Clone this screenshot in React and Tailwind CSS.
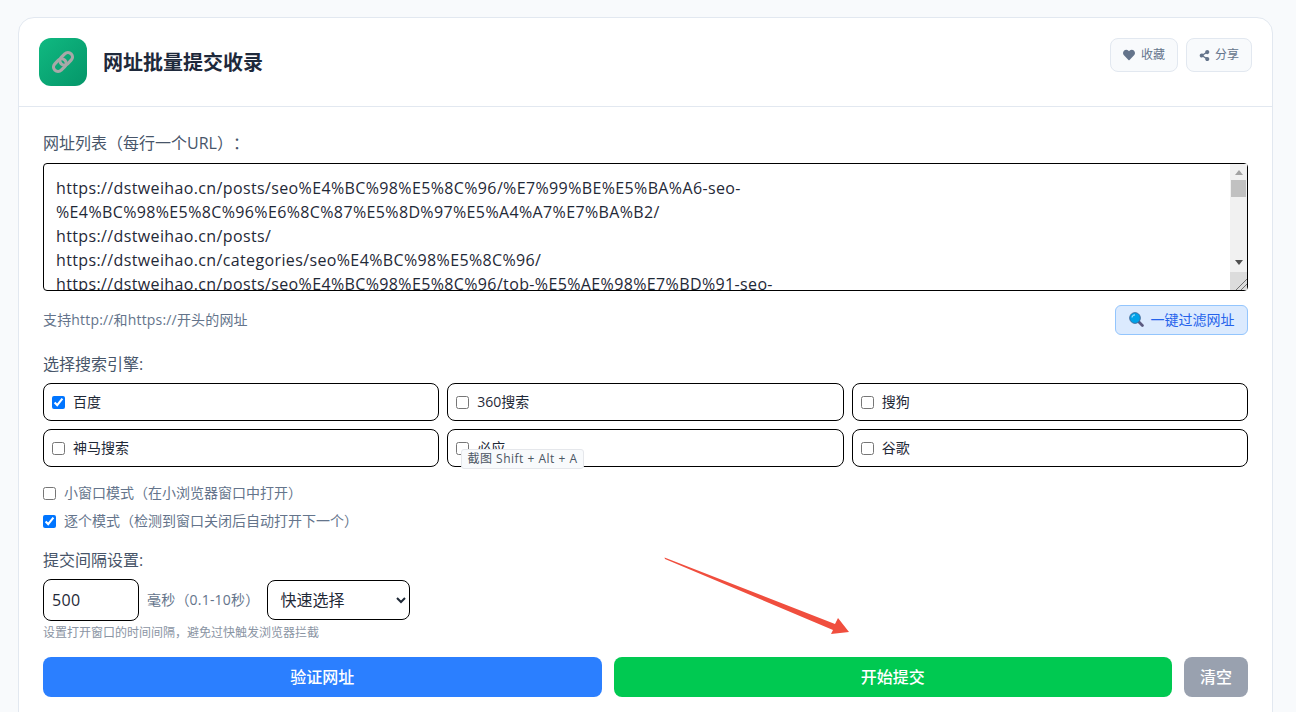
import React from "react";
import { FaHeart, FaShareAlt } from "react-icons/fa";

const urls = `https://dstweihao.cn/posts/seo%E4%BC%98%E5%8C%96/%E7%99%BE%E5%BA%A6-seo-%E4%BC%98%E5%8C%96%E6%8C%87%E5%8D%97%E5%A4%A7%E7%BA%B2/
https://dstweihao.cn/posts/
https://dstweihao.cn/categories/seo%E4%BC%98%E5%8C%96/
https://dstweihao.cn/posts/seo%E4%BC%98%E5%8C%96/tob-%E5%AE%98%E7%BD%91-seo-%E4%BC%98%E5%8C%96%E6%8C%87%E5%8D%97%E5%A4%A7%E7%BA%B2%E5%AE%98%E7%BD%91%E4%BC%98%E5%8C%96%E6%8C%87%E5%8D%97%E5%A4%A7%E7%BA%B2%E5%AE%98%E7%BD%91/`;

const font = "font-['Open_Sans','Noto_Sans_CJK_SC',sans-serif] [text-spacing-trim:space-all]";

function LinkIcon() {
  return (
    <svg width="26" height="26" viewBox="0 0 26 26" fill="none">
      <g transform="rotate(-45 13 13)" stroke="#a8a8a8" strokeWidth="3.2">
        <rect x="1.5" y="8.5" width="14" height="9" rx="4.5" />
        <rect x="10.5" y="8.5" width="14" height="9" rx="4.5" />
      </g>
    </svg>
  );
}

function SearchIcon() {
  return (
    <svg width="15" height="15" viewBox="0 0 15 15">
      <path d="M9.5 9.5 L13.4 13.4" stroke="#5b5a80" strokeWidth="2.8" strokeLinecap="round" />
      <circle cx="6" cy="6" r="5.4" fill="#00a2e8" stroke="#3f5f8f" strokeWidth="0.8" />
      <path d="M3 5.5 A3.2 3.2 0 0 1 6 2.8" stroke="#8fdcff" strokeWidth="1.2" fill="none" />
    </svg>
  );
}

function Engine({ label, checked }) {
  return (
    <label className="flex h-[38px] items-center rounded-lg border border-black pl-2 text-[14px] text-[#1f2937]">
      <input type="checkbox" defaultChecked={checked} className="m-0 h-[13px] w-[13px] accent-[#0075ff]" />
      <span className="ml-[8px] pb-[2px]">{label}</span>
    </label>
  );
}

function Mode({ label, checked }) {
  return (
    <label className="flex h-[28px] items-center text-[14px] text-[#64748b]">
      <input type="checkbox" defaultChecked={checked} className="m-0 h-[13px] w-[13px] accent-[#0075ff]" />
      <span className="ml-[8px] pb-[2px]">{label}</span>
    </label>
  );
}

export default function App() {
  return (
    <div className={`${font} relative h-[712px] w-[1296px] overflow-hidden bg-[#f8fafc] pl-[18px] pr-[23px] pt-[17px]`}>
      <div className="h-[760px] rounded-2xl border border-[#e2e8f0] bg-white">
        <header className="flex h-[89px] items-start justify-between border-b border-[#e2e8f0] pl-[20px] pr-[20px] pt-[20px]">
          <div className="flex items-center">
            <div className="flex h-12 w-12 items-center justify-center rounded-xl bg-gradient-to-br from-[#10b981] to-[#059669]">
              <LinkIcon />
            </div>
            <h1 className="ml-4 pt-[2px] text-[20px] font-bold text-[#1e293b]">网址批量提交收录</h1>
          </div>
          <div className="flex gap-2">
            <button className="flex h-[34px] w-[68px] items-center justify-center gap-[6px] rounded-lg border border-[#e2e8f0] bg-[#f8fafc] text-[12px] text-[#64748b]">
              <FaHeart className="text-[12px]" />
              收藏
            </button>
            <button className="flex h-[34px] w-[66px] items-center justify-center gap-[5px] rounded-lg border border-[#e2e8f0] bg-[#f8fafc] text-[12px] text-[#64748b]">
              <FaShareAlt className="text-[11px]" />
              分享
            </button>
          </div>
        </header>

        <main className="px-[24px] pt-[24px]">
          <div className="mb-[8px] h-[24px] text-[16px] leading-[24px] text-[#475569]">网址列表（每行一个URL）：</div>
          <div className="relative">
            <textarea
              readOnly
              defaultValue={urls}
              className="block h-[128px] w-full resize-y overflow-hidden rounded-[4px] border border-black py-[12px] pl-[12px] pr-[40px] text-[16px] leading-[24px] tracking-[0.37px] text-[#1f2937]"
            />
            <div className="absolute bottom-px right-px top-px flex w-[17px] flex-col items-center bg-[#f1f1f1] pt-[6px]">
              <div className="h-0 w-0 border-x-[4px] border-b-[5px] border-x-transparent border-b-[#a3a3a3]" />
              <div className="mt-[5px] h-[17px] w-[15px] bg-[#c1c1c1]" />
              <div className="mt-[63px] h-0 w-0 border-x-[4px] border-t-[5px] border-x-transparent border-t-[#505050]" />
              <div className="mt-[7px] flex flex-1 items-end justify-end self-stretch bg-[#dcdcdc]">
                <svg width="12" height="12" viewBox="0 0 12 12" stroke="#707070" strokeWidth="1">
                  <path d="M1 12 L12 1 M6 12 L12 6" />
                </svg>
              </div>
            </div>
          </div>

          <div className="mt-[14px] flex h-[30px] items-center justify-between">
            <span className="pb-[2px] text-[14px] tracking-[0.17px] text-[#64748b]">支持http://和https://开头的网址</span>
            <button className="flex h-[30px] w-[133px] items-center justify-center gap-[7px] rounded-md border border-[#93c5fd] bg-[#dbeafe] pb-[1px] text-[14px] text-[#2563eb]">
              <SearchIcon />
              一键过滤网址
            </button>
          </div>

          <div className="mt-[17px] h-[24px] text-[16px] leading-[24px] text-[#475569]">选择搜索引擎:</div>
          <div className="mt-[7px] grid grid-cols-3 gap-2">
            <Engine label="百度" checked />
            <Engine label="360搜索" />
            <Engine label="搜狗" />
            <Engine label="神马搜索" />
            <Engine label="必应" />
            <Engine label="谷歌" />
          </div>

          <div className="mt-[12px]">
            <Mode label="小窗口模式（在小浏览器窗口中打开）" />
            <Mode label="逐个模式（检测到窗口关闭后自动打开下一个）" checked />
          </div>

          <div className="mt-[13px] h-[24px] text-[16px] leading-[24px] text-[#475569]">提交间隔设置:</div>
          <div className="mt-[7px] flex items-center">
            <input
              readOnly
              defaultValue="500"
              className="h-[42px] w-[96px] rounded-lg border border-black px-[8px] text-[16px] tracking-[0.3px] text-[#1f2937]"
            />
            <span className="ml-[8px] pb-[2px] text-[14px] tracking-[0.2px] text-[#64748b]">毫秒（0.1-10秒）</span>
            <select className="ml-[8px] h-[40px] w-[143px] rounded-lg border border-black pl-[8px] text-[16px] text-[#1f2937]" defaultValue="q">
              <option value="q">快速选择</option>
            </select>
          </div>
          <div className="mt-[3px] h-[18px] text-[12px] leading-[18px] text-[#8a94a3]">设置打开窗口的时间间隔，避免过快触发浏览器拦截</div>

          <div className="mt-[15px] flex gap-3">
            <button className="h-10 flex-1 rounded-lg bg-blue-500 text-[16px] font-medium text-white">验证网址</button>
            <button className="h-10 flex-1 rounded-lg bg-green-500 text-[16px] font-medium text-white">开始提交</button>
            <button className="h-10 w-16 rounded-lg bg-gray-400 text-[16px] font-medium text-white">清空</button>
          </div>
        </main>
      </div>

      <div className="absolute left-[461px] top-[449px] flex h-[20px] w-[123px] items-center justify-center rounded-[3px] border border-[#e5e7eb] bg-[#f8fafc] text-[12px] tracking-[0.5px] text-[#4b5563]">
        截图 Shift + Alt + A
      </div>

      <svg className="absolute left-[660px] top-[552px]" width="195" height="86" viewBox="660 552 195 86">
        <path d="M664.5 557.5 L835 624 L838 618 L849 632 L831 634 L833 630 L665 559 Z" fill="#f04e3e" />
      </svg>
    </div>
  );
}
